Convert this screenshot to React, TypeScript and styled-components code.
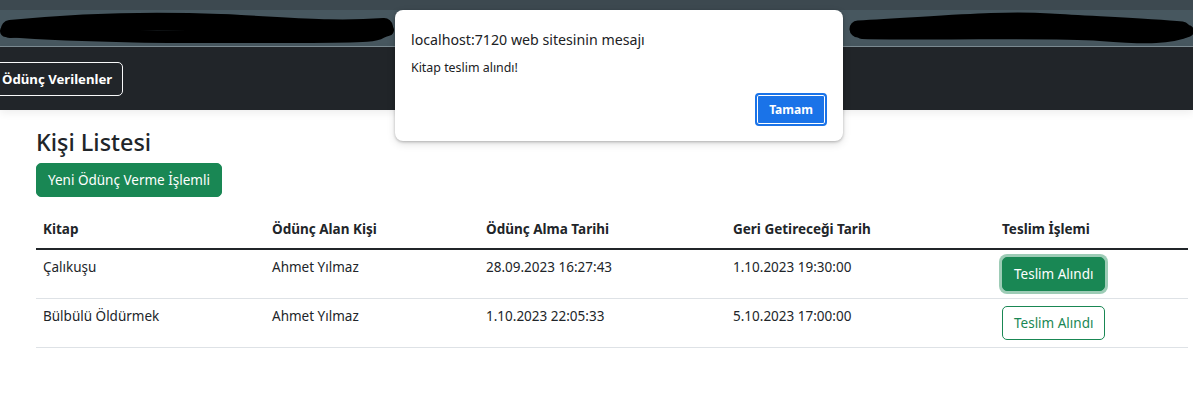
import React from "react";
import styled, { createGlobalStyle } from "styled-components";

const GlobalStyle = createGlobalStyle`
  html, body { margin: 0; padding: 0; background: #fff; }
  body {
    font-family: "Segoe UI", "Noto Sans", "Open Sans", sans-serif;
    color: #212529;
    font-size: 13.5px;
    line-height: 21.6px;
  }
  * { box-sizing: border-box; }
`;

const Page = styled.div`
  position: relative;
  width: 1193px;
  height: 410px;
  overflow: hidden;
  background: #fff;
`;

const ChromeBar = styled.div`
  height: 47px;
  padding-top: 10px;
  background: #3d4950;
`;

const ChromeBand = styled.div`
  height: 37px;
  background: #47575f;
  border-bottom: 1px solid #7d8c93;
`;

const Redaction = styled.svg`
  position: absolute;
  left: 0;
  top: 0;
`;

const Navbar = styled.nav`
  height: 63px;
  background: #212529;
  display: flex;
  align-items: center;
  overflow: hidden;
  box-shadow: 0 3px 8px rgba(0, 0, 0, 0.07);
  position: relative;
`;

const NavButton = styled.button`
  margin-left: -10px;
  height: 34px;
  padding: 0 10px 0 11px;
  background: transparent;
  border: 1px solid #f8f9fa;
  border-radius: 5px;
  color: #fff;
  font-family: inherit;
  font-size: 13.2px;
  font-weight: 700;
`;

const Main = styled.main`
  padding: 17px 5px 0 36px;
`;

const Title = styled.h3`
  margin: 0 0 6px;
  font-size: 23.4px;
  font-weight: 500;
  line-height: 30px;
`;

const Button = styled.button<{ $variant: "solid" | "outline"; $focused?: boolean }>`
  height: 34px;
  padding: 0 11px;
  border-radius: 5px;
  font-family: inherit;
  font-size: 13.5px;
  border: 1px solid #198754;
  background: ${(p) => (p.$variant === "solid" ? "#198754" : "#fff")};
  color: ${(p) => (p.$variant === "solid" ? "#fff" : "#198754")};
  box-shadow: ${(p) => (p.$focused ? "0 0 0 3px rgba(60, 153, 110, 0.5)" : "none")};
`;

const Table = styled.table`
  margin-top: 15px;
  width: 1152px;
  border-collapse: collapse;
  table-layout: fixed;
`;

const Th = styled.th`
  text-align: left;
  font-weight: 700;
  padding: 7px;
  height: 36px;
  border-bottom: 2px solid #212529;
`;

const Td = styled.td`
  padding: 7px;
  height: 49px;
  vertical-align: top;
  border-bottom: 1px solid #dee2e6;
`;

const Dialog = styled.div`
  position: absolute;
  left: 395px;
  top: 10px;
  width: 448px;
  height: 131px;
  background: #fff;
  border-radius: 8px;
  box-shadow: 0 1px 3px rgba(0, 0, 0, 0.25), 0 3px 8px rgba(0, 0, 0, 0.12);
  padding: 20px 16px 15px;
  display: flex;
  flex-direction: column;
  color: #202124;
`;

const DialogTitle = styled.div`
  font-size: 14.2px;
  line-height: 20px;
`;

const DialogMessage = styled.div`
  margin-top: 10px;
  font-size: 12.4px;
  line-height: 16px;
`;

const DialogActions = styled.div`
  margin-top: auto;
  display: flex;
  justify-content: flex-end;
`;

const DialogButton = styled.button`
  width: 72px;
  height: 33px;
  border-radius: 4px;
  border: 2px solid #1a73e8;
  box-shadow: inset 0 0 0 1px #fff;
  background: #1a73e8;
  color: #fff;
  font-family: inherit;
  font-size: 12px;
  font-weight: 700;
`;

const rows = [
  { book: "Çalıkuşu", person: "Ahmet Yılmaz", taken: "28.09.2023 16:27:43", due: "1.10.2023 19:30:00", focused: true },
  { book: "Bülbülü Öldürmek", person: "Ahmet Yılmaz", taken: "1.10.2023 22:05:33", due: "5.10.2023 17:00:00", focused: false },
];

const colWidths = [229, 214, 247, 269, 193];

export default function App() {
  return (
    <Page>
      <GlobalStyle />
      <ChromeBar>
        <ChromeBand />
      </ChromeBar>
      <Redaction width="1193" height="47" viewBox="0 0 1193 47">
        <g stroke="#000" strokeLinecap="round" fill="none">
          <path d="M10 29 C80 22 150 20 220 23 S330 31 384 27" strokeWidth="18" />
          <path d="M6 31 C100 38 200 37 300 37 S370 34 388 30" strokeWidth="12" />
          <path d="M60 22 C120 18 180 18 240 20" strokeWidth="10" />
          <path d="M858 29 C950 24 1000 19 1050 22 S1150 27 1182 30" strokeWidth="17" />
          <path d="M862 33 C950 35 1050 31 1100 35 S1170 38 1188 31" strokeWidth="12" />
        </g>
      </Redaction>
      <Navbar>
        <NavButton>Ödünç Verilenler</NavButton>
      </Navbar>
      <Main>
        <Title>Kişi Listesi</Title>
        <Button $variant="solid">Yeni Ödünç Verme İşlemli</Button>
        <Table>
          <colgroup>
            {colWidths.map((w, i) => (
              <col key={i} style={{ width: w }} />
            ))}
          </colgroup>
          <thead>
            <tr>
              <Th>Kitap</Th>
              <Th>Ödünç Alan Kişi</Th>
              <Th>Ödünç Alma Tarihi</Th>
              <Th>Geri Getireceği Tarih</Th>
              <Th>Teslim İşlemi</Th>
            </tr>
          </thead>
          <tbody>
            {rows.map((r) => (
              <tr key={r.book}>
                <Td>{r.book}</Td>
                <Td>{r.person}</Td>
                <Td>{r.taken}</Td>
                <Td>{r.due}</Td>
                <Td>
                  <Button $variant={r.focused ? "solid" : "outline"} $focused={r.focused}>
                    Teslim Alındı
                  </Button>
                </Td>
              </tr>
            ))}
          </tbody>
        </Table>
      </Main>
      <Dialog>
        <DialogTitle>localhost:7120 web sitesinin mesajı</DialogTitle>
        <DialogMessage>Kitap teslim alındı!</DialogMessage>
        <DialogActions>
          <DialogButton>Tamam</DialogButton>
        </DialogActions>
      </Dialog>
    </Page>
  );
}
